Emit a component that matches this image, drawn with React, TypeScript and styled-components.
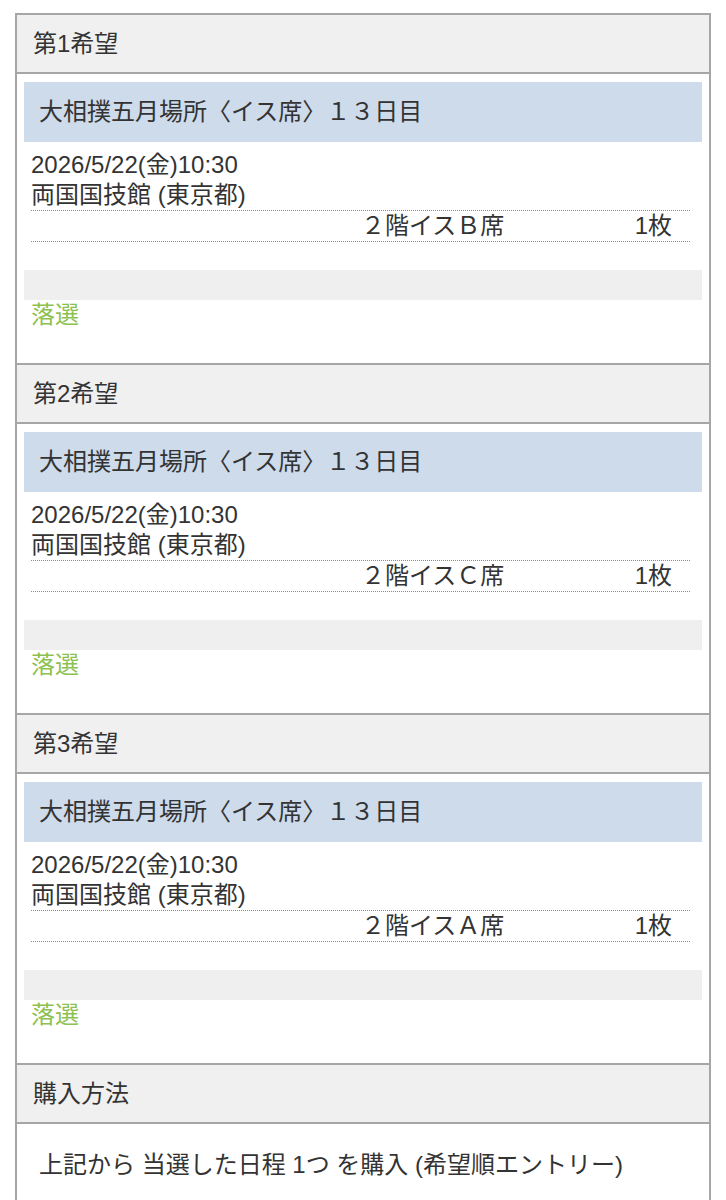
import React from "react"
import styled, { createGlobalStyle } from "styled-components"

const GlobalStyle = createGlobalStyle`
  body {
    margin: 0;
    background: #fff;
    font-family: "Liberation Sans", "Noto Sans CJK JP", sans-serif;
    color: #333;
  }
`

interface Entry {
  rank: number
  title: string
  date: string
  venue: string
  seat: string
  count: string
  result: string
}

const entries: Entry[] = [
  { rank: 1, title: "大相撲五月場所〈イス席〉１３日目", date: "2026/5/22(金)10:30", venue: "両国国技館 (東京都)", seat: "２階イスＢ席", count: "1枚", result: "落選" },
  { rank: 2, title: "大相撲五月場所〈イス席〉１３日目", date: "2026/5/22(金)10:30", venue: "両国国技館 (東京都)", seat: "２階イスＣ席", count: "1枚", result: "落選" },
  { rank: 3, title: "大相撲五月場所〈イス席〉１３日目", date: "2026/5/22(金)10:30", venue: "両国国技館 (東京都)", seat: "２階イスＡ席", count: "1枚", result: "落選" },
]

export default function App() {
  return (
    <>
      <GlobalStyle />
      <Wrapper>
        {entries.map((e) => (
          <Section key={e.rank}>
            <SectionHeader>第{e.rank}希望</SectionHeader>
            <EntryBody>
              <Title>{e.title}</Title>
              <Info>
                <Line>{e.date}</Line>
                <Line>{e.venue}</Line>
                <SeatRow>
                  <SeatName>{e.seat}</SeatName>
                  <SeatCount>{e.count}</SeatCount>
                </SeatRow>
              </Info>
              <Spacer />
              <Result>{e.result}</Result>
            </EntryBody>
          </Section>
        ))}
        <Section>
          <SectionHeader>購入方法</SectionHeader>
          <MethodBody>上記から 当選した日程 1つ を購入 (希望順エントリー)</MethodBody>
        </Section>
      </Wrapper>
    </>
  )
}

const Wrapper = styled.div`
  margin: 13px 15px 0 15px;
  border: 2px solid #a6a6a6;
  border-bottom: none;
  font-size: 24px;
  line-height: 30px;
`

const Section = styled.section`
  border-bottom: 2px solid #a6a6a6;
`

const SectionHeader = styled.div`
  height: 57px;
  display: flex;
  align-items: center;
  padding: 0 16px;
  background: #f0f0f0;
  border-bottom: 2px solid #a6a6a6;
`

const EntryBody = styled.div`
  padding: 8px 7px 33px 7px;
`

const Title = styled.div`
  height: 60px;
  display: flex;
  align-items: center;
  padding: 0 15px;
  background: #cddbeb;
`

const Info = styled.div`
  margin: 8px 12px 0 7px;
`

const Line = styled.div`
  white-space: nowrap;
`

const SeatRow = styled.div`
  display: flex;
  border-top: 1px dotted #8a8a8a;
  border-bottom: 1px dotted #8a8a8a;
  padding-right: 18px;
`

const SeatName = styled.div`
  flex: 1;
  padding-left: 330px;
`

const SeatCount = styled.div``

const Spacer = styled.div`
  height: 30px;
  margin-top: 28px;
  background: #efefef;
`

const Result = styled.div`
  padding-left: 7px;
  color: #8cc152;
`

const MethodBody = styled.div`
  padding: 26px 22px 40px 22px;
`
